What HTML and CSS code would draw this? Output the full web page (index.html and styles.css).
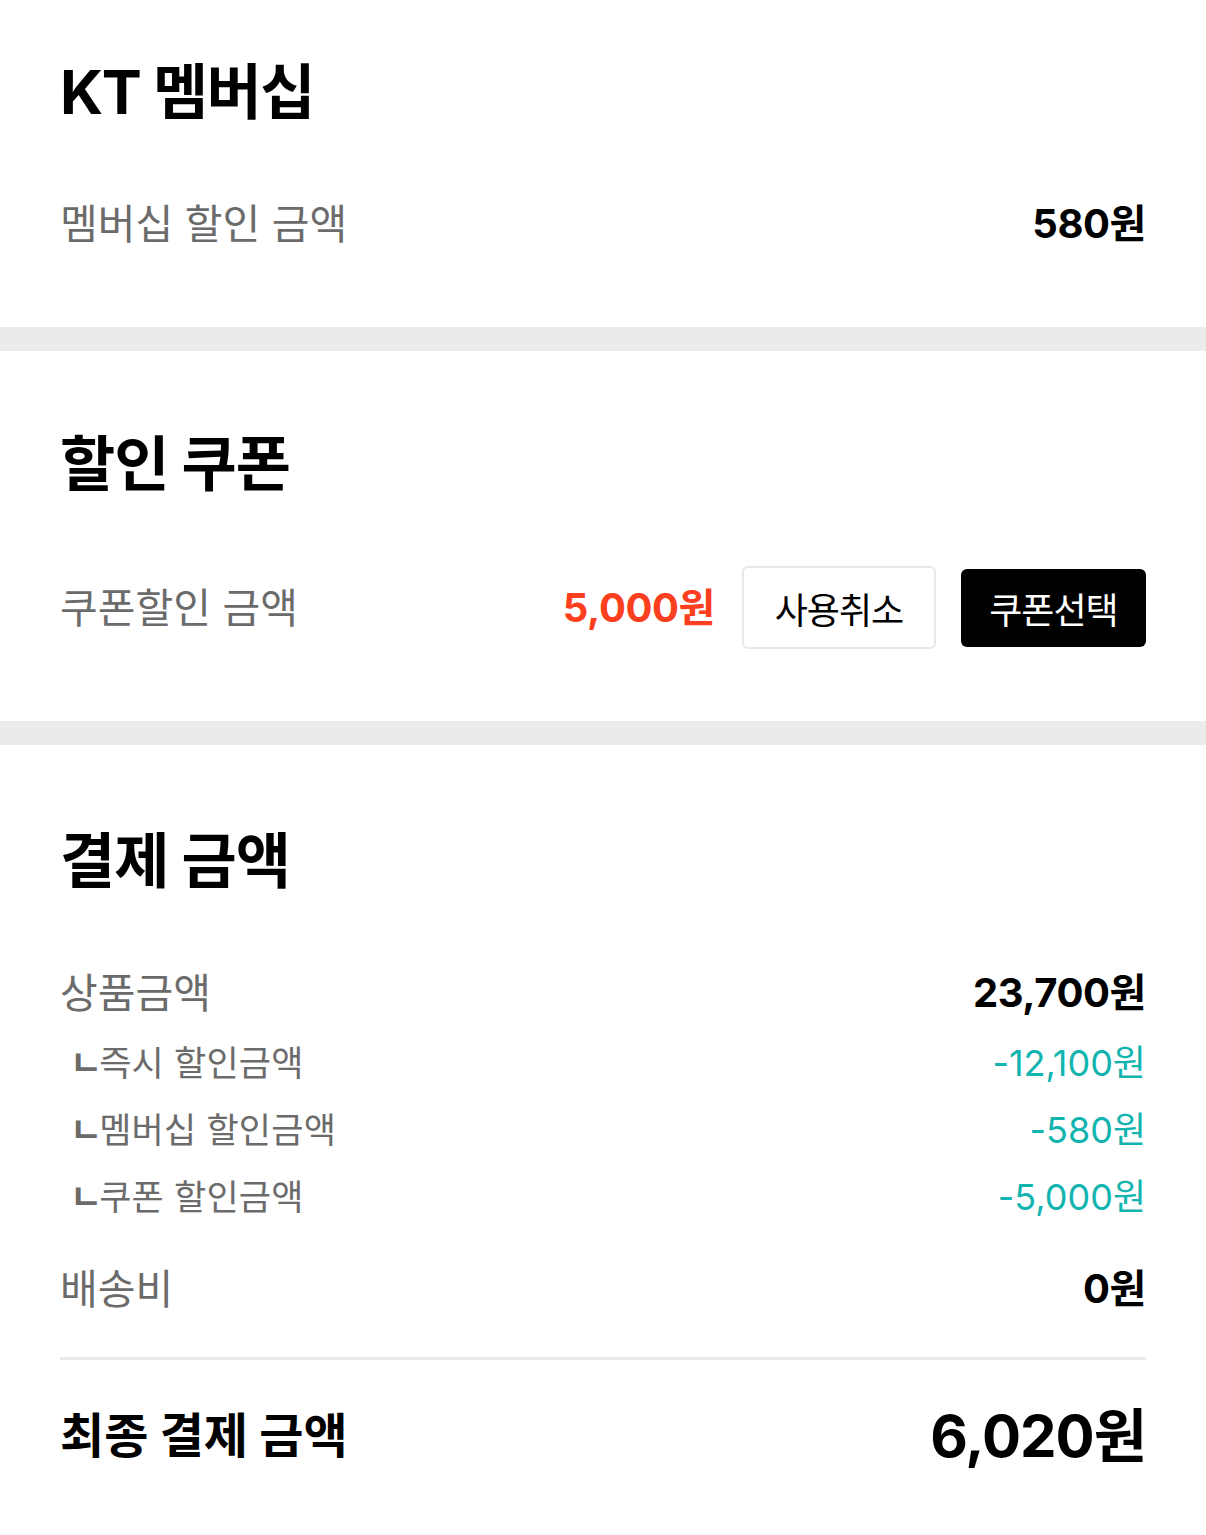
FILE: index.html
```html
<!DOCTYPE html>
<html lang="ko">
<head>
    <meta charset="UTF-8">
    <meta name="viewport" content="width=device-width, initial-scale=1.0">
    <title>결제 금액</title>
    <link rel="stylesheet" href="styles.css">
</head>
<body>
    <section class="block block-first">
        <h2 class="block-title">KT 멤버십</h2>
        <div class="row">
            <span class="label">멤버십 할인 금액</span>
            <span class="value">580원</span>
        </div>
    </section>

    <section class="block block-coupon">
        <h2 class="block-title">할인 쿠폰</h2>
        <div class="row">
            <span class="label">쿠폰할인 금액</span>
            <div class="coupon-actions">
                <span class="value value-red">5,000원</span>
                <button type="button" class="btn btn-line">사용취소</button>
                <button type="button" class="btn btn-dark">쿠폰선택</button>
            </div>
        </div>
    </section>

    <section class="block block-last">
        <h2 class="block-title">결제 금액</h2>
        <div class="row">
            <span class="label">상품금액</span>
            <span class="value">23,700원</span>
        </div>
        <div class="row row-sub">
            <span class="label"><span class="branch">ㄴ</span>즉시 할인금액</span>
            <span class="value">-12,100원</span>
        </div>
        <div class="row row-sub">
            <span class="label"><span class="branch">ㄴ</span>멤버십 할인금액</span>
            <span class="value">-580원</span>
        </div>
        <div class="row row-sub">
            <span class="label"><span class="branch">ㄴ</span>쿠폰 할인금액</span>
            <span class="value">-5,000원</span>
        </div>
        <div class="row row-ship">
            <span class="label">배송비</span>
            <span class="value">0원</span>
        </div>
        <div class="row row-total">
            <span class="total-label">최종 결제 금액</span>
            <span class="total-value">6,020원</span>
        </div>
    </section>
</body>
</html>
```

FILE: styles.css
```css
* {
    box-sizing: border-box;
}
body {
    margin: 0;
    background: #fff;
    color: #000;
    font-family: Inter, "Noto Sans CJK KR", sans-serif;
}
.block {
    padding: 76px 60px 74px;
    border-bottom: 24px solid #ebebeb;
}
.block-first {
    padding-top: 55px;
    padding-bottom: 78px;
}
.block-coupon {
    padding-bottom: 72px;
}
.block-coupon .block-title {
    margin-bottom: 65px;
}
.block-last {
    border-bottom: none;
    padding-top: 79px;
    padding-bottom: 60px;
}
.block-title {
    margin: 0 0 70px;
    font-size: 60px;
    line-height: 74px;
    font-weight: 700;
    letter-spacing: -1px;
}
.block-first .block-title {
    letter-spacing: -1.5px;
}
.row {
    display: flex;
    align-items: center;
    justify-content: space-between;
    min-height: 50px;
}
.label {
    font-size: 41px;
    line-height: 50px;
    color: #6b6b6b;
    letter-spacing: 0;
}
.value {
    font-size: 40px;
    line-height: 50px;
    font-weight: 700;
    letter-spacing: -0.4px;
}
.value-red {
    color: #fc3f1e;
}
.coupon-actions {
    display: flex;
    align-items: center;
    gap: 25px;
}
.coupon-actions .value {
    margin-right: 2px;
}
.btn {
    font-family: "Noto Sans CJK KR", sans-serif;
    font-size: 36px;
    letter-spacing: -1px;
    border-radius: 6px;
    cursor: pointer;
}
.btn-line {
    width: 194px;
    height: 83px;
    background: #fff;
    color: #000;
    border: 2px solid #e8e8e8;
}
.btn-dark {
    width: 185px;
    height: 78px;
    background: #000;
    color: #fff;
    border: none;
}
.row-sub {
    margin-top: 23px;
    min-height: 44px;
}
.row-sub .label {
    font-size: 35px;
    line-height: 44px;
    padding-left: 10px;
    letter-spacing: 0.2px;
}
.branch {
    font-weight: 700;
    letter-spacing: -3px;
}
.row-sub .value {
    font-size: 36px;
    line-height: 44px;
    font-weight: 400;
    letter-spacing: 0;
    color: #12b4af;
}
.row-ship {
    margin-top: 45px;
    padding-bottom: 43px;
    border-bottom: 3px solid #ebebeb;
}
.row-total {
    margin-top: 40px;
}
.total-label {
    font-size: 48px;
    line-height: 72px;
    font-weight: 700;
    letter-spacing: 0;
}
.total-value {
    font-size: 58px;
    line-height: 72px;
    font-weight: 700;
    letter-spacing: -1px;
}
```
